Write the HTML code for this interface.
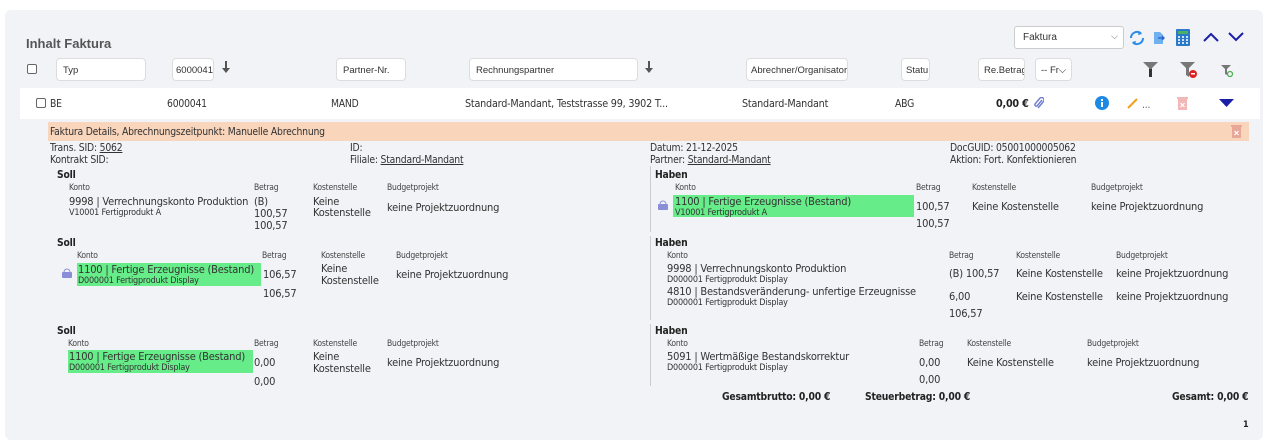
<!DOCTYPE html>
<html><head><meta charset="utf-8"><style>
*{margin:0;padding:0;box-sizing:border-box}
body{width:1270px;height:448px;background:#fff;position:relative;overflow:hidden;font-family:"Liberation Sans",sans-serif;color:#333}
.card{position:absolute;left:5px;top:10px;width:1258px;height:430px;background:#f2f3f7;border-radius:6px}
.t{position:absolute;white-space:nowrap;font-size:10.3px;line-height:12px;font-family:"DejaVu Sans Condensed","Liberation Sans",sans-serif;letter-spacing:-0.2px}
.g{font-size:11px}
.h{font-size:8.5px;color:#444}
.b{font-weight:bold;color:#222}
.in{position:absolute;top:58px;height:23px;background:#fff;border:1px solid #ddd;border-radius:4px;font-size:9.5px;padding:6px 6px;color:#333;white-space:nowrap;overflow:hidden}
.green{position:absolute;background:#66ec88}
.vl{position:absolute;width:1px;background:#ccc;left:650px}
u{text-decoration:underline}
.sm{font-size:9px}
</style></head><body>
<div class="card"></div>
<div class="t" style="left:26px;top:37px;font-size:13px;line-height:14px;font-weight:bold;color:#555;font-family:'Liberation Sans',sans-serif;letter-spacing:0">Inhalt Faktura</div>

<div style="position:absolute;left:1014px;top:26px;width:110px;height:23px;background:#fff;border:1px solid #ccc;border-radius:3px;font-size:10px;padding:5px 8px">Faktura<span style="position:absolute;right:5px;top:4px;color:#666;font-size:9px">⌵</span></div>
<svg style="position:absolute;left:1128px;top:29px" width="18" height="18" viewBox="0 0 18 18"><path d="M3 9a6 6 0 0 1 10-4.5M15 9a6 6 0 0 1-10 4.5" fill="none" stroke="#2b8ce8" stroke-width="2"/><path d="M11 2l3 3-4 1z M7 16l-3-3 4-1z" fill="#2b8ce8"/></svg>
<svg style="position:absolute;left:1153px;top:31px" width="12" height="14"><path d="M1 1h6l3 3v9H1z" fill="#6fb0ee"/><path d="M5 7h6M9 5l2 2-2 2" stroke="#2a6bd1" stroke-width="1.5" fill="none"/></svg>
<svg style="position:absolute;left:1176px;top:29px" width="14" height="17"><rect x="0" y="0" width="14" height="17" rx="1" fill="#2b79c9"/><rect x="2" y="2" width="10" height="3" fill="#4ab065"/><g fill="#cfe3f7"><rect x="2" y="7" width="2" height="2"/><rect x="6" y="7" width="2" height="2"/><rect x="10" y="7" width="2" height="2"/><rect x="2" y="10" width="2" height="2"/><rect x="6" y="10" width="2" height="2"/><rect x="10" y="10" width="2" height="2"/><rect x="2" y="13" width="2" height="2"/><rect x="6" y="13" width="2" height="2"/><rect x="10" y="13" width="2" height="2"/></g></svg>
<svg style="position:absolute;left:1203px;top:32px" width="16" height="10"><path d="M1 9l7-7 7 7" stroke="#1b1fa8" stroke-width="2" fill="none"/></svg>
<svg style="position:absolute;left:1228px;top:32px" width="16" height="10"><path d="M1 1l7 7 7-7" stroke="#1b1fa8" stroke-width="2" fill="none"/></svg>

<div style="position:absolute;left:27px;top:64px;width:10px;height:10px;border:1px solid #666;border-radius:2px;background:#fff"></div>
<div class="in" style="left:56px;width:90px">Typ</div>
<div class="in" style="left:172px;width:42px;padding:6px 3px">6000041</div>
<svg style="position:absolute;left:222px;top:61px" width="8" height="12"><path d="M4 0v8" stroke="#555" stroke-width="2"/><path d="M0 7h8l-4 5z" fill="#555"/></svg>
<div class="in" style="left:336px;width:70px">Partner-Nr.</div>
<div class="in" style="left:469px;width:169px">Rechnungspartner</div>
<svg style="position:absolute;left:645px;top:61px" width="8" height="12"><path d="M4 0v8" stroke="#555" stroke-width="2"/><path d="M0 7h8l-4 5z" fill="#555"/></svg>
<div class="in" style="left:746px;width:102px;padding:6px 4px">Abrechner/Organisator</div>
<div class="in" style="left:901px;width:29px;padding:6px 4px">Statu</div>
<div class="in" style="left:978px;width:47px;padding:6px 5px">Re.Betrag</div>
<div class="in" style="left:1035px;width:37px;padding:6px 5px">-- Fr⌵</div>
<svg style="position:absolute;left:1143px;top:62px" width="16" height="16"><path d="M0 0h15l-6 6v9l-3-2V6z" fill="#777"/><path d="M6 7h3v8H6z" fill="#333"/></svg>
<svg style="position:absolute;left:1180px;top:62px" width="20" height="17"><path d="M0 0h15l-6 6v9l-3-2V6z" fill="#777"/><circle cx="13" cy="12" r="4" fill="#e02020"/><rect x="11" y="11" width="4" height="1.5" fill="#fff"/></svg>
<svg style="position:absolute;left:1221px;top:65px" width="14" height="14"><path d="M0 0h10l-4 4v6l-2-1V4z" fill="#777"/><circle cx="9" cy="9" r="2.5" fill="none" stroke="#4caf50" stroke-width="1.3"/></svg>

<div style="position:absolute;left:20px;top:88px;width:1240px;height:31px;background:#fff"></div>
<div style="position:absolute;left:36px;top:98px;width:10px;height:10px;border:1px solid #666;border-radius:2px;background:#fff"></div>
<div class="t" style="left:50px;top:98px">BE</div>
<div class="t" style="left:167px;top:98px">6000041</div>
<div class="t" style="left:331px;top:98px">MAND</div>
<div class="t" style="left:465px;top:98px;font-size:10.7px">Standard-Mandant, Teststrasse 99, 3902 T...</div>
<div class="t" style="left:742px;top:98px;font-size:10.7px">Standard-Mandant</div>
<div class="t" style="left:895px;top:98px">ABG</div>
<div class="t b" style="left:996px;top:98px;font-size:10.7px">0,00 €</div>
<svg style="position:absolute;left:1033px;top:97px" width="11" height="12"><path d="M9 3L4 9a1.5 1.5 0 0 1-2-2l5-6a2.5 2.5 0 0 1 3.5 3.5L5 11" fill="none" stroke="#6c7bd0" stroke-width="1.4"/></svg>
<svg style="position:absolute;left:1095px;top:96px" width="14" height="14"><circle cx="7" cy="7" r="7" fill="#1e88e5"/><rect x="6" y="6" width="2" height="5" fill="#fff"/><circle cx="7" cy="4" r="1.1" fill="#fff"/></svg>
<svg style="position:absolute;left:1127px;top:97px" width="12" height="12"><path d="M1 11l9-9" stroke="#f0a020" stroke-width="2"/></svg>
<div class="t" style="left:1142px;top:99px;color:#666">...</div>
<svg style="position:absolute;left:1177px;top:96px" width="11" height="14"><rect x="0" y="1" width="11" height="2" fill="#f2b8b8"/><rect x="1" y="3" width="9" height="11" fill="#f2b8b8"/><path d="M3.5 7l4 4M7.5 7l-4 4" stroke="#fff" stroke-width="1.2"/></svg>
<svg style="position:absolute;left:1219px;top:99px" width="15" height="8"><path d="M0 0h15L7.5 8z" fill="#1b1fa8"/></svg>

<div style="position:absolute;left:48px;top:122px;width:1201px;height:19px;background:#f8d5bb"></div>
<div class="t" style="left:50px;top:126px">Faktura Details, Abrechnungszeitpunkt: Manuelle Abrechnung</div>
<svg style="position:absolute;left:1231px;top:124px" width="11" height="14"><rect x="0" y="1" width="11" height="2" fill="#e8a898"/><rect x="1" y="3" width="9" height="11" fill="#e8a898"/><path d="M3.5 7l4 4M7.5 7l-4 4" stroke="#fff" stroke-width="1.2"/></svg>

<div class="t" style="left:50px;top:142px">Trans. SID: <u>5062</u></div>
<div class="t" style="left:50px;top:154px">Kontrakt SID:</div>
<div class="t" style="left:350px;top:142px">ID:</div>
<div class="t" style="left:350px;top:154px">Filiale: <u>Standard-Mandant</u></div>
<div class="t" style="left:650px;top:142px">Datum: 21-12-2025</div>
<div class="t" style="left:650px;top:154px">Partner: <u>Standard-Mandant</u></div>
<div class="t" style="left:950px;top:142px">DocGUID: 05001000005062</div>
<div class="t" style="left:950px;top:154px">Aktion: Fort. Konfektionieren</div>

<div class="vl" style="top:166px;height:66px"></div>
<div class="vl" style="top:236px;height:84px"></div>
<div class="vl" style="top:324px;height:62px"></div>

<!-- Section 1 -->
<div class="t b" style="left:57px;top:169px">Soll</div>
<div class="t h" style="left:69px;top:182px">Konto</div><div class="t h" style="left:254px;top:182px">Betrag</div><div class="t h" style="left:313px;top:182px">Kostenstelle</div><div class="t h" style="left:387px;top:182px">Budgetprojekt</div>
<div class="t g" style="left:69px;top:196px">9998 | Verrechnungskonto Produktion</div>
<div class="t sm" style="left:69px;top:207px">V10001 Fertigprodukt A</div>
<div class="t g" style="left:254px;top:196px">(B)</div><div class="t g" style="left:254px;top:208px">100,57</div><div class="t g" style="left:254px;top:220px">100,57</div>
<div class="t g" style="left:313px;top:196px">Keine</div><div class="t g" style="left:313px;top:207px">Kostenstelle</div>
<div class="t g" style="left:387px;top:202px">keine Projektzuordnung</div>

<div class="t b" style="left:655px;top:169px">Haben</div>
<div class="t h" style="left:675px;top:182px">Konto</div><div class="t h" style="left:916px;top:182px">Betrag</div><div class="t h" style="left:972px;top:182px">Kostenstelle</div><div class="t h" style="left:1091px;top:182px">Budgetprojekt</div>
<div class="green" style="left:673px;top:195px;width:241px;height:22px"></div>
<svg style="position:absolute;left:658px;top:200px" width="10" height="10"><path d="M2 4a3 3 0 0 1 6 0" stroke="#8a8ed8" fill="none"/><rect x="0" y="4" width="10" height="6" rx="1" fill="#8a8ed8"/></svg>
<div class="t g" style="left:675px;top:196px">1100 | Fertige Erzeugnisse (Bestand)</div>
<div class="t sm" style="left:675px;top:207px">V10001 Fertigprodukt A</div>
<div class="t g" style="left:916px;top:201px">100,57</div><div class="t g" style="left:916px;top:218px">100,57</div>
<div class="t g" style="left:972px;top:201px">Keine Kostenstelle</div>
<div class="t g" style="left:1091px;top:201px">keine Projektzuordnung</div>

<!-- Section 2 -->
<div class="t b" style="left:57px;top:237px">Soll</div>
<div class="t h" style="left:77px;top:250px">Konto</div><div class="t h" style="left:262px;top:250px">Betrag</div><div class="t h" style="left:321px;top:250px">Kostenstelle</div><div class="t h" style="left:396px;top:250px">Budgetprojekt</div>
<div class="green" style="left:77px;top:263px;width:184px;height:23px"></div>
<svg style="position:absolute;left:62px;top:268px" width="10" height="10"><path d="M2 4a3 3 0 0 1 6 0" stroke="#8a8ed8" fill="none"/><rect x="0" y="4" width="10" height="6" rx="1" fill="#8a8ed8"/></svg>
<div class="t g" style="left:78px;top:264px">1100 | Fertige Erzeugnisse (Bestand)</div>
<div class="t sm" style="left:78px;top:275px">D000001 Fertigprodukt Display</div>
<div class="t g" style="left:263px;top:269px">106,57</div><div class="t g" style="left:263px;top:288px">106,57</div>
<div class="t g" style="left:321px;top:263px">Keine</div><div class="t g" style="left:321px;top:275px">Kostenstelle</div>
<div class="t g" style="left:396px;top:269px">keine Projektzuordnung</div>

<div class="t b" style="left:655px;top:237px">Haben</div>
<div class="t h" style="left:667px;top:250px">Konto</div><div class="t h" style="left:949px;top:250px">Betrag</div><div class="t h" style="left:1016px;top:250px">Kostenstelle</div><div class="t h" style="left:1116px;top:250px">Budgetprojekt</div>
<div class="t g" style="left:667px;top:263px">9998 | Verrechnungskonto Produktion</div>
<div class="t sm" style="left:667px;top:274px">D000001 Fertigprodukt Display</div>
<div class="t g" style="left:949px;top:268px">(B) 100,57</div>
<div class="t g" style="left:1016px;top:268px">Keine Kostenstelle</div>
<div class="t g" style="left:1116px;top:268px">keine Projektzuordnung</div>
<div class="t g" style="left:667px;top:286px">4810 | Bestandsveränderung- unfertige Erzeugnisse</div>
<div class="t sm" style="left:667px;top:297px">D000001 Fertigprodukt Display</div>
<div class="t g" style="left:949px;top:291px">6,00</div>
<div class="t g" style="left:1016px;top:291px">Keine Kostenstelle</div>
<div class="t g" style="left:1116px;top:291px">keine Projektzuordnung</div>
<div class="t g" style="left:949px;top:308px">106,57</div>

<!-- Section 3 -->
<div class="t b" style="left:57px;top:325px">Soll</div>
<div class="t h" style="left:68px;top:338px">Konto</div><div class="t h" style="left:254px;top:338px">Betrag</div><div class="t h" style="left:313px;top:338px">Kostenstelle</div><div class="t h" style="left:387px;top:338px">Budgetprojekt</div>
<div class="green" style="left:68px;top:350px;width:185px;height:23px"></div>
<div class="t g" style="left:69px;top:351px">1100 | Fertige Erzeugnisse (Bestand)</div>
<div class="t sm" style="left:69px;top:362px">D000001 Fertigprodukt Display</div>
<div class="t g" style="left:254px;top:357px">0,00</div><div class="t g" style="left:254px;top:376px">0,00</div>
<div class="t g" style="left:313px;top:351px">Keine</div><div class="t g" style="left:313px;top:363px">Kostenstelle</div>
<div class="t g" style="left:387px;top:357px">keine Projektzuordnung</div>

<div class="t b" style="left:655px;top:325px">Haben</div>
<div class="t h" style="left:667px;top:338px">Konto</div><div class="t h" style="left:919px;top:338px">Betrag</div><div class="t h" style="left:967px;top:338px">Kostenstelle</div><div class="t h" style="left:1087px;top:338px">Budgetprojekt</div>
<div class="t g" style="left:667px;top:351px">5091 | Wertmäßige Bestandskorrektur</div>
<div class="t sm" style="left:667px;top:362px">D000001 Fertigprodukt Display</div>
<div class="t g" style="left:919px;top:357px">0,00</div><div class="t g" style="left:919px;top:374px">0,00</div>
<div class="t g" style="left:967px;top:357px">Keine Kostenstelle</div>
<div class="t g" style="left:1087px;top:357px">keine Projektzuordnung</div>

<div class="t b" style="left:722px;top:391px">Gesamtbrutto: 0,00 €</div>
<div class="t b" style="left:865px;top:391px">Steuerbetrag: 0,00 €</div>
<div class="t b" style="left:1172px;top:391px">Gesamt: 0,00 €</div>
<div class="t b" style="left:1243px;top:419px;font-size:9px">1</div>
</body></html>
